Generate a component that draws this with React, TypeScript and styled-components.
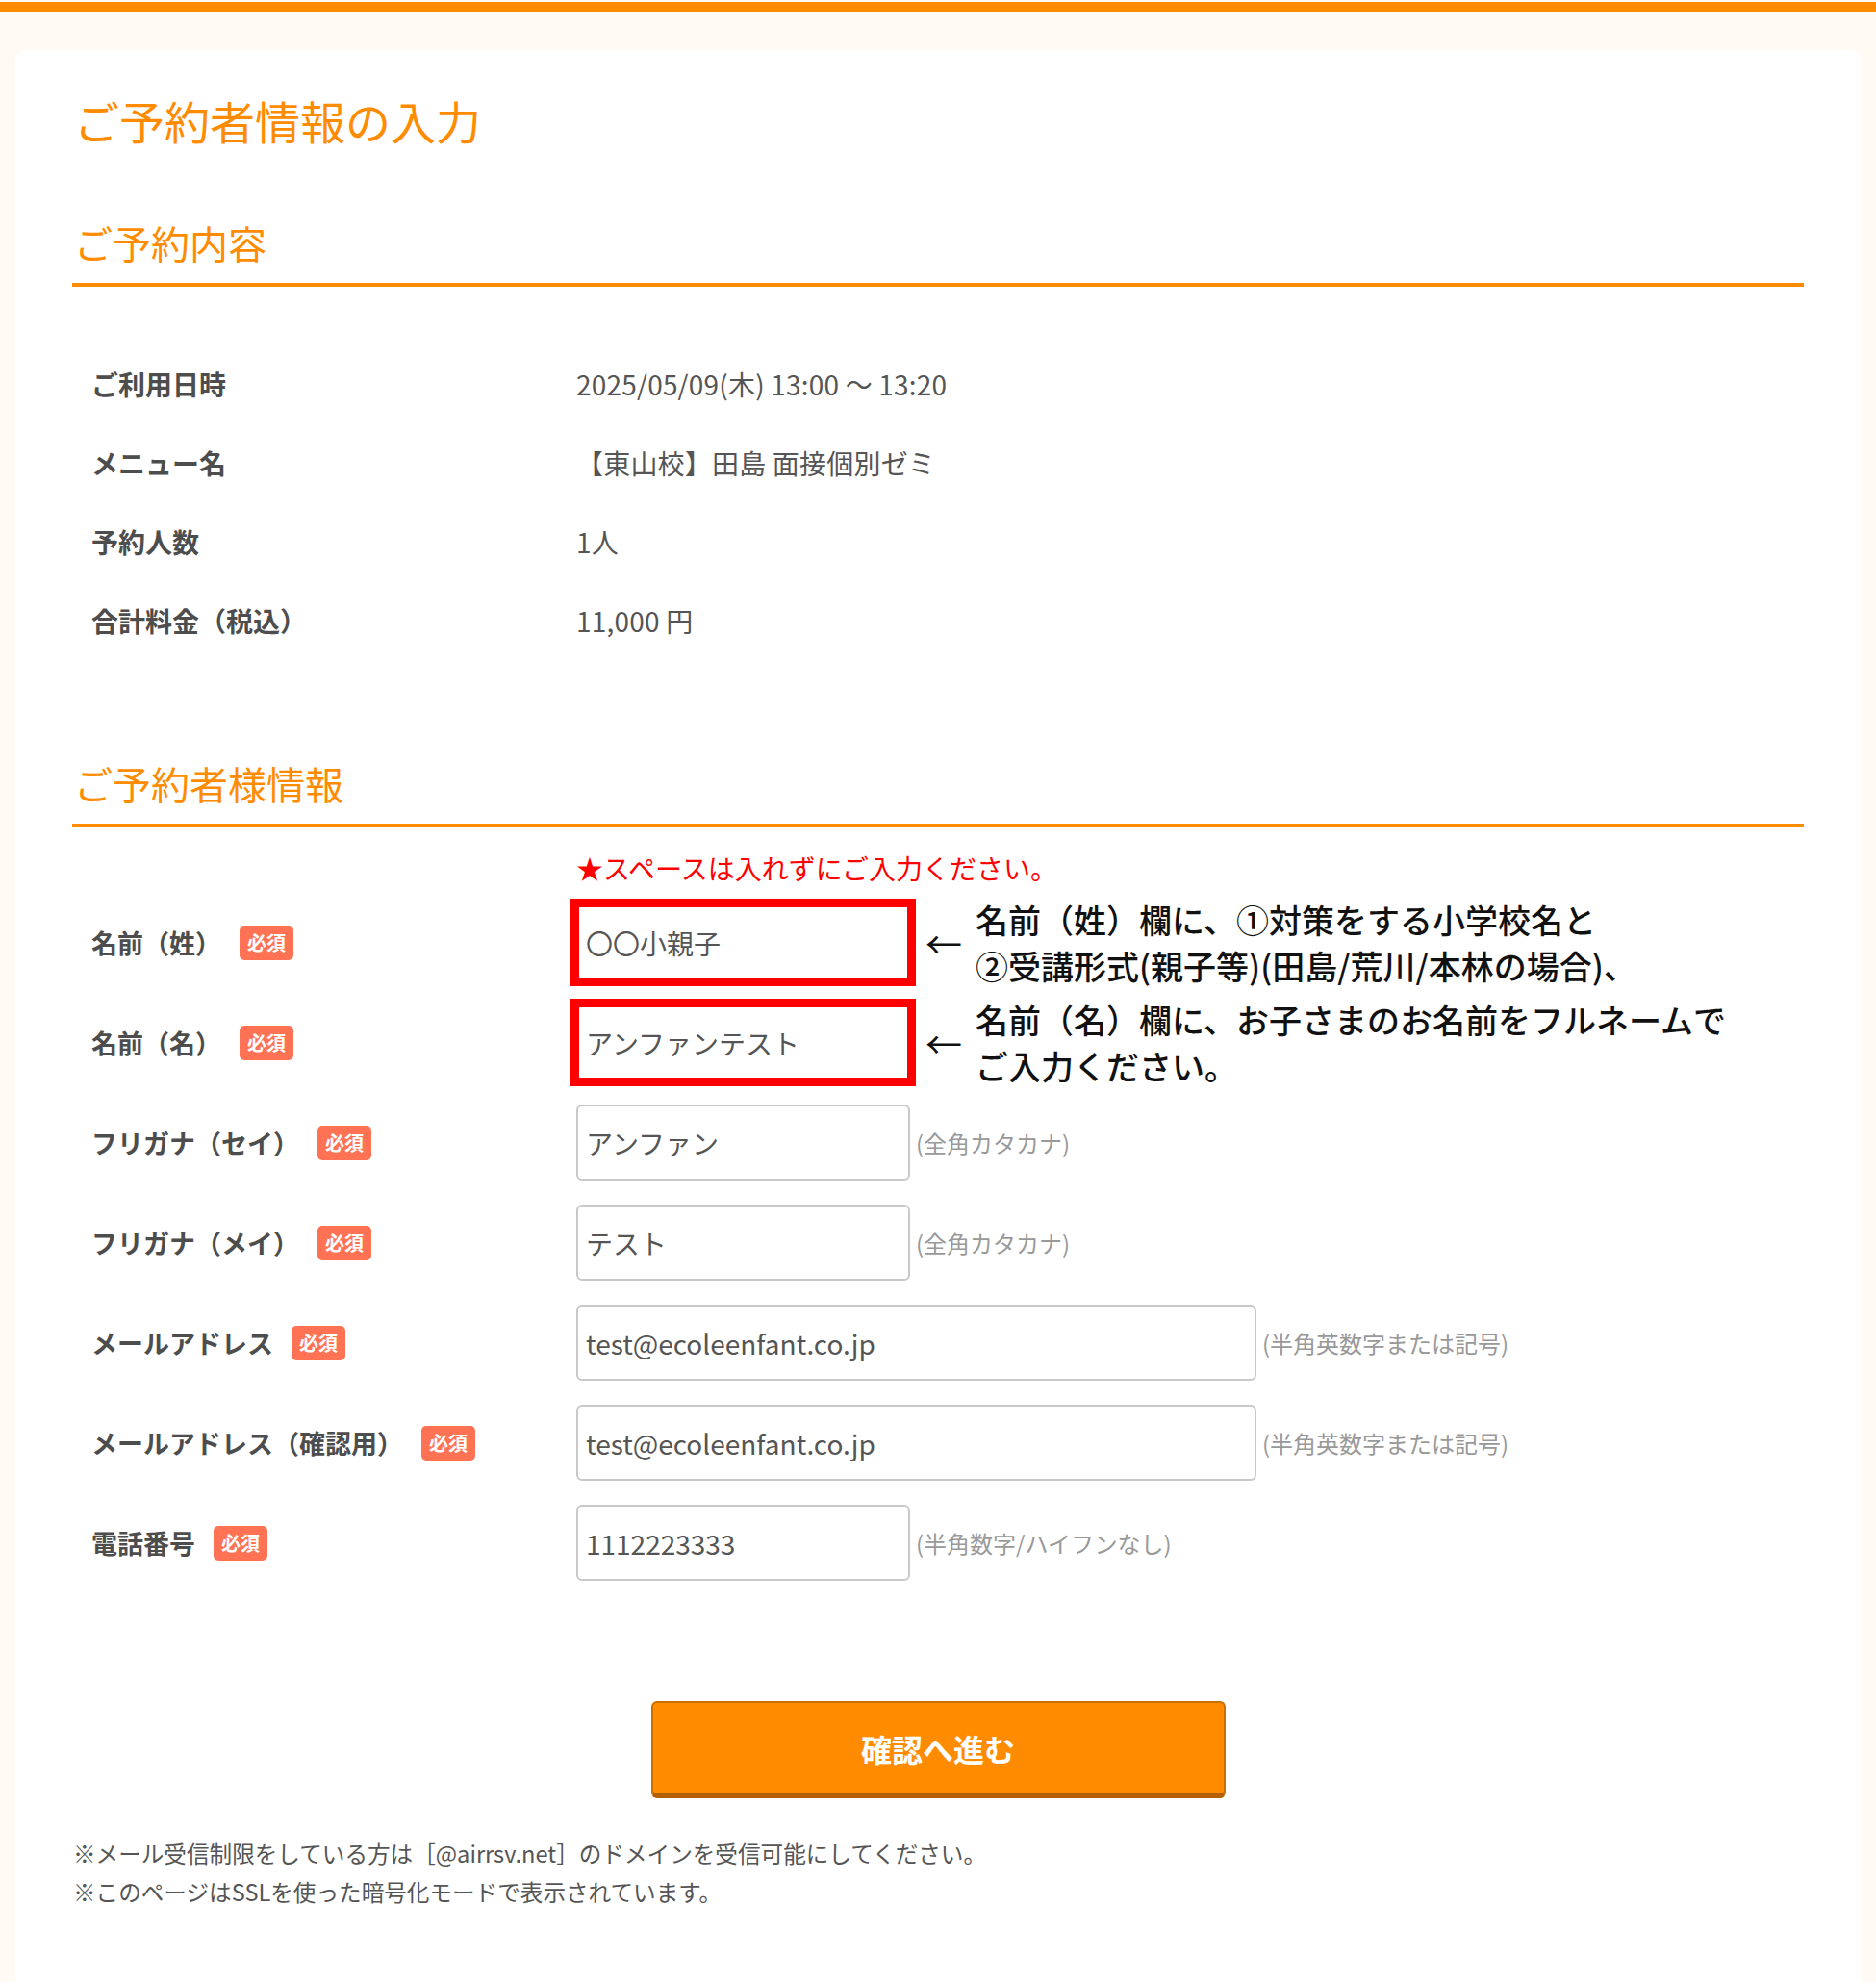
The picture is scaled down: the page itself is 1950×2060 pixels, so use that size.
import React from "react";
import styled, {createGlobalStyle} from "styled-components";

const orange = "#ff8c00";
const fontStack = `"Noto Sans CJK JP", "Noto Sans", sans-serif`;

const GlobalStyle = createGlobalStyle`
  html, body {
    margin: 0;
    padding: 0;
    background: #fffaf3;
  }
  body {
    font-family: ${fontStack};
    color: #555;
  }
  * {
    box-sizing: border-box;
  }
`;

interface InfoItem {
  label: string;
  value: string;
}

interface FieldItem {
  label: string;
  value: string;
  wide?: boolean;
  marked?: boolean;
  hint?: string;
  note?: string[];
}

const infoItems: InfoItem[] = [
  {label: "ご利用日時", value: "2025/05/09(木) 13:00 〜 13:20"},
  {label: "メニュー名", value: "【東山校】田島 面接個別ゼミ"},
  {label: "予約人数", value: "1人"},
  {label: "合計料金（税込）", value: "11,000 円"},
];

const fields: FieldItem[] = [
  {
    label: "名前（姓）",
    value: "〇〇小親子",
    marked: true,
    note: ["名前（姓）欄に、①対策をする小学校名と", "②受講形式(親子等)(田島/荒川/本林の場合)、"],
  },
  {
    label: "名前（名）",
    value: "アンファンテスト",
    marked: true,
    note: ["名前（名）欄に、お子さまのお名前をフルネームで", "ご入力ください。"],
  },
  {label: "フリガナ（セイ）", value: "アンファン", hint: "(全角カタカナ)"},
  {label: "フリガナ（メイ）", value: "テスト", hint: "(全角カタカナ)"},
  {label: "メールアドレス", value: "test@ecoleenfant.co.jp", wide: true, hint: "(半角英数字または記号)"},
  {label: "メールアドレス（確認用）", value: "test@ecoleenfant.co.jp", wide: true, hint: "(半角英数字または記号)"},
  {label: "電話番号", value: "1112223333", hint: "(半角数字/ハイフンなし)"},
];

export default function App() {
  return <Page>
    <GlobalStyle/>
    <TopBar/>
    <Card>
      <PageTitle>ご予約者情報の入力</PageTitle>

      <SectionHeading $gap={67}>ご予約内容</SectionHeading>
      <InfoTable>
        {infoItems.map((item) => (
          <InfoRow key={item.label}>
            <InfoLabel>{item.label}</InfoLabel>
            <InfoValue>{item.value}</InfoValue>
          </InfoRow>
        ))}
      </InfoTable>

      <SectionHeading $gap={101}>ご予約者様情報</SectionHeading>
      <Notice>★スペースは入れずにご入力ください。</Notice>
      <Form>
        {fields.map((field) => (
          <FormRow key={field.label}>
            <FormLabel>
              {field.label}
              <Badge>必須</Badge>
            </FormLabel>
            <Field>
              <TextInput
                type="text"
                defaultValue={field.value}
                $wide={field.wide}
                $marked={field.marked}
              />
              {field.hint && <Hint>{field.hint}</Hint>}
              {field.note && <Annotation>
                <Arrow>←</Arrow>
                <AnnotationText>
                  {field.note.map((line) => <div key={line}>{line}</div>)}
                </AnnotationText>
              </Annotation>}
            </Field>
          </FormRow>
        ))}
      </Form>

      <ButtonArea>
        <SubmitButton type="button">確認へ進む</SubmitButton>
      </ButtonArea>

      <Notes>
        <p>※メール受信制限をしている方は［@airrsv.net］のドメインを受信可能にしてください。</p>
        <p>※このページはSSLを使った暗号化モードで表示されています。</p>
      </Notes>
    </Card>
  </Page>
}

const Page = styled('div')`
  min-height: 100vh;
  padding-top: 2px;
  display: flex;
  flex-direction: column;
`;
const TopBar = styled('div')`
  height: 10px;
  background: ${orange};
`;
const Card = styled('main')`
  flex: 1;
  margin: 40px 15px 0 16px;
  padding: 40px 60px 60px 59px;
  background: #fff;
  border-radius: 12px 12px 0 0;
`;
const PageTitle = styled('h1')`
  margin: 0;
  padding-left: 2px;
  font-size: 47px;
  line-height: 66px;
  font-weight: 400;
  color: ${orange};
`;
const SectionHeading = styled('h2')<{ $gap: number }>`
  margin: ${p => p.$gap}px 0 0;
  padding: 0 0 15px 2px;
  font-size: 40px;
  line-height: 54px;
  font-weight: 400;
  color: ${orange};
  border-bottom: 4px solid ${orange};
`;
const InfoTable = styled('div')`
  margin-top: 60px;
  display: grid;
  grid-auto-rows: 82px;
`;
const InfoRow = styled('div')`
  display: grid;
  grid-template-columns: 524px 1fr;
  align-items: center;
  font-size: 28px;
`;
const InfoLabel = styled('div')`
  padding-left: 20px;
  font-weight: 700;
  color: #4d4d4d;
`;
const InfoValue = styled('div')`
  color: #555;
  letter-spacing: 0.2px;
`;
const Notice = styled('div')`
  margin-top: 22px;
  padding-left: 524px;
  font-size: 28px;
  line-height: 40px;
  color: #ff0000;
`;
const Form = styled('div')`
  margin-top: 18px;
  display: grid;
  grid-auto-rows: 79px;
  row-gap: 25px;
`;
const FormRow = styled('div')`
  display: grid;
  grid-template-columns: 524px 1fr;
  align-items: center;
`;
const FormLabel = styled('div')`
  display: flex;
  align-items: center;
  gap: 19px;
  padding-left: 20px;
  font-size: 27px;
  font-weight: 700;
  color: #4d4d4d;
`;
const Badge = styled('span')`
  display: inline-block;
  height: 36px;
  padding: 0 8px;
  border-radius: 5px;
  background: #ff7354;
  color: #fff;
  font-size: 20px;
  line-height: 36px;
  font-weight: 700;
`;
const Field = styled('div')`
  height: 79px;
  display: flex;
  align-items: center;
`;
const TextInput = styled('input')<{ $wide?: boolean; $marked?: boolean }>`
  width: ${p => p.$wide ? 707 : 347}px;
  height: 79px;
  padding: 0 ${p => p.$marked ? 7 : 8}px;
  border: ${p => p.$marked ? '3px solid #ff0000' : '2px solid #c9c9c9'};
  border-radius: ${p => p.$marked ? 0 : 6}px;
  box-shadow: ${p => p.$marked ? '0 0 0 6px #ff0000' : 'none'};
  background: #fff;
  font-family: ${fontStack};
  font-size: 28px;
  color: #555;
  outline: none;
`;
const Hint = styled('span')`
  margin-left: 6px;
  font-size: 24px;
  color: #999;
  white-space: nowrap;
`;
const Annotation = styled('div')`
  display: flex;
  align-items: center;
  margin-left: 16px;
  color: #111;
`;
const Arrow = styled('span')`
  font-size: 38px;
  line-height: 1;
`;
const AnnotationText = styled('div')`
  margin-left: 14px;
  font-size: 34px;
  line-height: 48px;
  font-weight: 500;
  white-space: nowrap;
`;
const ButtonArea = styled('div')`
  margin-top: 125px;
  display: flex;
  justify-content: center;
`;
const SubmitButton = styled('button')`
  width: 597px;
  height: 101px;
  border: 2px solid #c96f00;
  border-bottom: 5px solid #b35f00;
  border-radius: 6px;
  background: ${orange};
  color: #fff;
  font-family: ${fontStack};
  font-size: 32px;
  font-weight: 700;
  cursor: pointer;
`;
const Notes = styled('div')`
  margin-top: 37px;
  padding-left: 1px;
  font-size: 23.6px;
  line-height: 40px;
  color: #555;

  p {
    margin: 0;
  }
`;
